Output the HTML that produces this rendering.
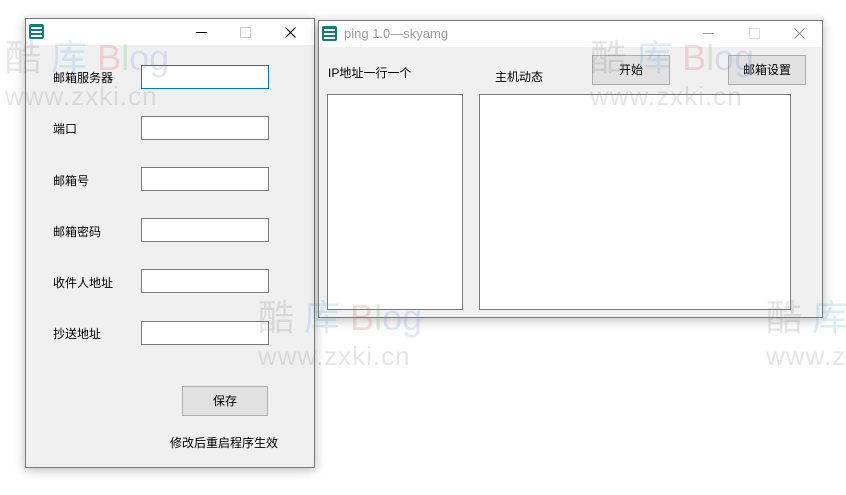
<!DOCTYPE html>
<html><head><meta charset="utf-8"><style>
body{margin:0;width:846px;height:495px;background:#fff;position:relative;overflow:hidden;font-family:"Liberation Sans","Noto Sans CJK SC",sans-serif;font-size:12px;color:#000}
.win{position:absolute;background:#f0f0f0;border:1px solid #7a7a7a;box-shadow:0 2px 10px rgba(0,0,0,.28)}
.tb{position:absolute;left:0;right:0;top:0;height:26px;background:#fff}
.ico{position:absolute;left:3px;top:5px;width:15px;height:15px;background:#0f7f7a;border-radius:2px;overflow:hidden}
.ico i{position:absolute;left:2px;right:2px;height:1.5px;background:#fff}
.ab{position:absolute}
.in{position:absolute;background:#fff;border:1px solid #7a7a7a;box-sizing:border-box}
.btn{position:absolute;background:#e1e1e1;border:1px solid #adadad;box-sizing:border-box;text-align:center}
.wm{position:absolute;z-index:10;pointer-events:none;opacity:.18;font-family:"Liberation Sans","Noto Sans CJK SC",sans-serif}
.wm .t{font-size:36px;line-height:40px;white-space:nowrap}
.wm .u{font-size:26px;line-height:28px;color:#777;white-space:nowrap;margin-top:4px;letter-spacing:1px}
</style></head><body>
<div class="win" style="left:25px;top:18px;width:288px;height:448px">
 <div class="tb">
  <div class="ico"><i style="top:3px"></i><i style="top:7px"></i><i style="top:11px"></i></div>
  <div class="ab" style="left:170px;top:13px;width:11px;height:1px;background:#000"></div>
  <div class="ab" style="left:214px;top:8px;width:9px;height:9px;border:1px solid #ccc"></div>
  <svg class="ab" style="left:259px;top:8px" width="11" height="11"><path d="M0.5 0.5L10.5 10.5M10.5 0.5L0.5 10.5" stroke="#000" stroke-width="1.1"/></svg>
 </div>
 <div class="ab" style="left:27px;top:50px">邮箱服务器</div>
 <div class="in" style="left:115px;top:46px;width:128px;height:24px;border-color:#0078d7"></div>
 <div class="ab" style="left:27px;top:101px">端口</div>
 <div class="in" style="left:115px;top:97px;width:128px;height:24px"></div>
 <div class="ab" style="left:27px;top:153px">邮箱号</div>
 <div class="in" style="left:115px;top:148px;width:128px;height:24px"></div>
 <div class="ab" style="left:27px;top:204px">邮箱密码</div>
 <div class="in" style="left:115px;top:199px;width:128px;height:24px"></div>
 <div class="ab" style="left:27px;top:255px">收件人地址</div>
 <div class="in" style="left:115px;top:250px;width:128px;height:24px"></div>
 <div class="ab" style="left:27px;top:306px">抄送地址</div>
 <div class="in" style="left:115px;top:302px;width:128px;height:24px"></div>
 <div class="btn" style="left:156px;top:367px;width:86px;height:30px;line-height:28px">保存</div>
 <div class="ab" style="left:144px;top:415px">修改后重启程序生效</div>
</div>
<div class="win" style="left:318px;top:20px;width:503px;height:296px">
 <div class="tb">
  <div class="ico"><i style="top:3px"></i><i style="top:7px"></i><i style="top:11px"></i></div>
  <div class="ab" style="left:25px;top:5px;color:#999;font-size:13px">ping 1.0—skyamg</div>
  <div class="ab" style="left:384px;top:12px;width:11px;height:1px;background:#999"></div>
  <div class="ab" style="left:430px;top:7px;width:9px;height:9px;border:1px solid #ddd"></div>
  <svg class="ab" style="left:475px;top:7px" width="11" height="11"><path d="M0.5 0.5L10.5 10.5M10.5 0.5L0.5 10.5" stroke="#999" stroke-width="1.1"/></svg>
 </div>
 <div class="ab" style="left:9px;top:43px">IP地址一行一个</div>
 <div class="ab" style="left:176px;top:47px">主机动态</div>
 <div class="btn" style="left:273px;top:34px;width:78px;height:30px;line-height:28px">开始</div>
 <div class="btn" style="left:409px;top:34px;width:78px;height:30px;line-height:28px">邮箱设置</div>
 <div class="in" style="left:8px;top:73px;width:136px;height:216px"></div>
 <div class="in" style="left:160px;top:73px;width:312px;height:216px"></div>
</div>
<div class="wm" style="left:5px;top:38px"><div class="t"><span style="color:#777">酷</span> <span style="color:#3aa0e0">库</span> <span style="color:#e04040">B</span><span style="color:#40b040">l</span><span style="color:#6080d0">og</span></div><div class="u">www.zxki.cn</div></div>
<div class="wm" style="left:258px;top:298px"><div class="t"><span style="color:#777">酷</span> <span style="color:#3aa0e0">库</span> <span style="color:#e04040">B</span><span style="color:#40b040">l</span><span style="color:#6080d0">og</span></div><div class="u">www.zxki.cn</div></div>
<div class="wm" style="left:590px;top:38px"><div class="t"><span style="color:#777">酷</span> <span style="color:#3aa0e0">库</span> <span style="color:#e04040">B</span><span style="color:#40b040">l</span><span style="color:#6080d0">og</span></div><div class="u">www.zxki.cn</div></div>
<div class="wm" style="left:766px;top:298px"><div class="t"><span style="color:#777">酷</span> <span style="color:#3aa0e0">库</span></div><div class="u">www.zxki.cn</div></div>
</body></html>
